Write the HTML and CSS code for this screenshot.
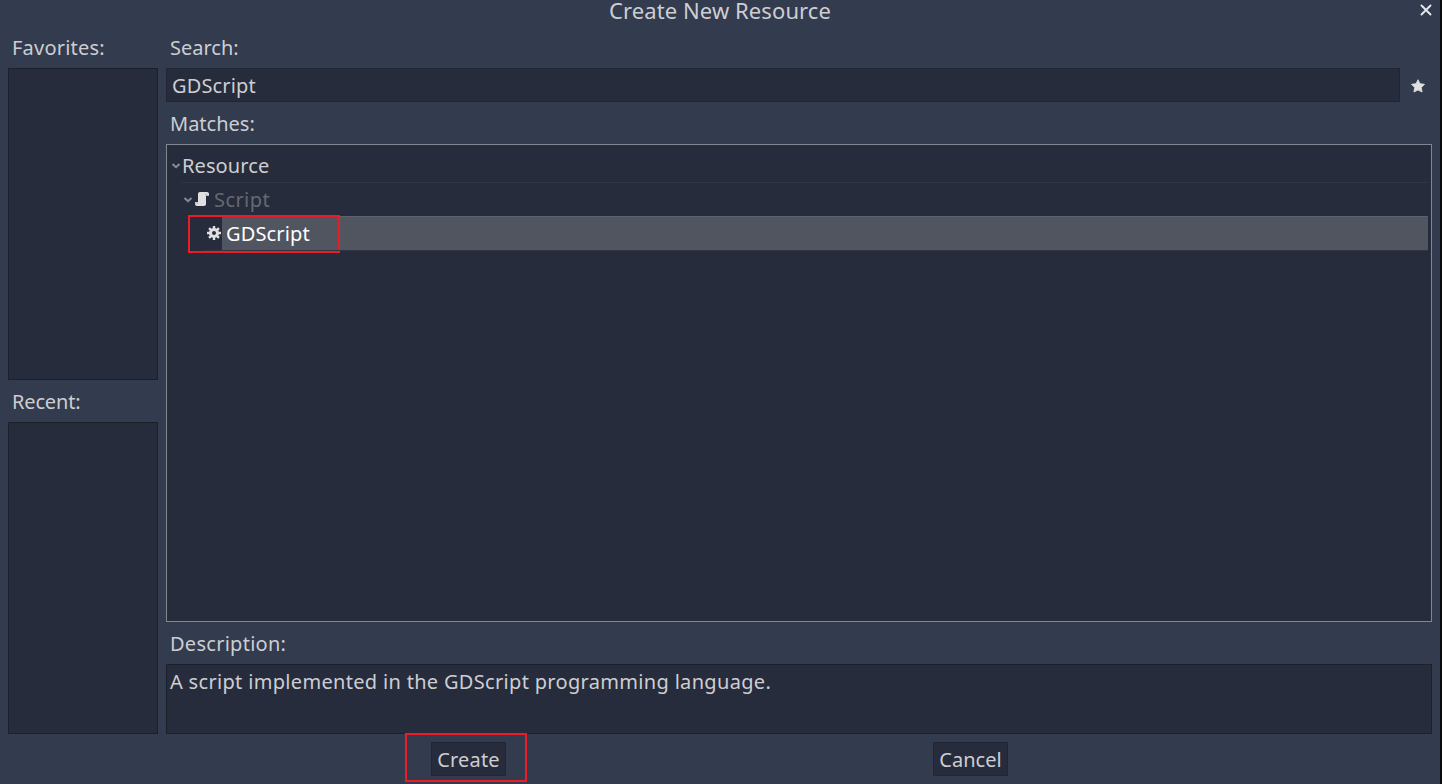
FILE: index.html
```html
<!DOCTYPE html>
<html lang="en">
<head>
<meta charset="utf-8">
<title>Create New Resource</title>
<link rel="stylesheet" href="styles.css">
</head>
<body>
<div class="dialog">
  <header class="titlebar">
    <h1 class="title">Create New Resource</h1>
    <svg class="close" viewBox="0 0 16 16"><path d="M3.500 3.500l9 9M12.500 3.500l-9 9" fill="none" stroke="#e8e9ec" stroke-width="1.900" stroke-linecap="round"/></svg>
  </header>
  <main class="columns">
    <aside class="side">
      <div class="label favorites">Favorites:</div>
      <div class="panel grow"></div>
      <div class="label recent">Recent:</div>
      <div class="panel grow"></div>
    </aside>
    <section class="content">
      <div class="label">Search:</div>
      <div class="search">
        <div class="input">GDScript</div>
        <svg class="star" viewBox="0 0 16 16"><path d="M8 1.700L10 5.700L14.500 6.300L11.300 9.500L12.100 14L8 12L3.900 14L4.700 9.500L1.500 6.300L6 5.700Z" fill="#e0e0e0" stroke="#e0e0e0" stroke-width=".8" stroke-linejoin="round"/></svg>
      </div>
      <div class="label">Matches:</div>
      <div class="tree">
        <div class="row root">
          <svg class="arrow" viewBox="0 0 12 12"><path d="M2.500 4L6 7.200L9.500 4" fill="none" stroke="#868b95" stroke-width="2"/></svg>
          <span class="name">Resource</span>
        </div>
        <div class="row child">
          <svg class="arrow" viewBox="0 0 12 12"><path d="M2.500 4L6 7.200L9.500 4" fill="none" stroke="#868b95" stroke-width="2"/></svg>
          <svg class="icon script-icon" viewBox="0 0 16 16"><path d="M6 1C4.900 1 4 1.900 4 3V11H1V13C1 14.100 1.900 15 3 15H10C11.100 15 12 14.100 12 13V5H15V3C15 1.900 14.100 1 13 1Z" fill="#e0e0e0"/><path d="M11.500 2.500V5H15V4H12.500V2.500ZM1 11.500H4V13H3V12.500H1Z" fill="#b4b6ba"/></svg>
          <span class="muted">Script</span>
        </div>
        <div class="row leaf">
          <svg class="icon" viewBox="0 0 16 16"><g fill="#e0e0e0"><path fill-rule="evenodd" d="M8 3a5 5 0 1 0 0 10a5 5 0 0 0 0-10ZM8 6a2 2 0 1 1 0 4a2 2 0 0 1 0-4Z"/><path id="teeth" d="M6.800 1H9.200V4H6.800ZM6.800 12H9.200V15H6.800Z"/><use href="#teeth" transform="rotate(45 8 8)"/><use href="#teeth" transform="rotate(90 8 8)"/><use href="#teeth" transform="rotate(135 8 8)"/></g></svg>
          <div class="selected">GDScript</div>
          <div class="mark mark-row"></div>
        </div>
      </div>
      <div class="label wide">Description:</div>
      <div class="panel description">A script implemented in the GDScript programming language.</div>
    </section>
  </main>
  <footer class="actions">
    <div class="slot"><button class="button create">Create</button><div class="mark mark-button"></div></div>
    <div class="slot"><button class="button">Cancel</button></div>
  </footer>
</div>
</body>
</html>
```
FILE: styles.css
```css
* { box-sizing: border-box; }
body {
  margin: 0;
  height: 784px;
  overflow: hidden;
  background: #080a0c;
  font: 20px/28px "Noto Sans", sans-serif;
  color: #cdced2;
}
.dialog {
  width: 1440px;
  height: 784px;
  display: flex;
  flex-direction: column;
  background: #333b4f;
}
.titlebar {
  position: relative;
  height: 26px;
  display: flex;
  justify-content: center;
}
.title {
  margin: 0;
  height: 20px;
  font-size: 22px;
  line-height: 20px;
  font-weight: 400;
  letter-spacing: .09px;
}
.close { position: absolute; right: 6px; top: 2px; width: 16px; height: 16px; }
.columns { height: 708px; display: flex; gap: 8px; padding: 0 8px; }
.side { width: 150px; display: flex; flex-direction: column; }
.content { flex: 1; display: flex; flex-direction: column; }
.label { height: 42px; flex: none; padding: 8px 4px 0; }
.favorites { letter-spacing: .22px; }
.recent { letter-spacing: -.15px; }
.wide { letter-spacing: .27px; }
.panel { background: #262c3b; border: 1px solid #1b202b; }
.grow { flex: 1; }
.search { display: flex; align-items: center; height: 34px; gap: 10px; }
.input {
  width: 1234px;
  height: 34px;
  padding: 3px 5px;
  background: #262c3b;
  border: 1px solid #202633;
  letter-spacing: .14px;
}
.star { width: 16px; height: 16px; margin-top: 1px; }
.tree { height: 478px; background: #262c3b; border: 1px solid #82868f; padding: 4px 3px; }
.row { position: relative; display: flex; align-items: center; height: 34px; }
.root::after, .child::after, .leaf::after {
  content: "";
  position: absolute;
  right: 0;
  bottom: 0;
  left: 12px;
  height: 1px;
  background: #303644;
}
.child::after { left: 24px; }
.leaf::after { left: 36px; bottom: -1px; }
.arrow { width: 12px; height: 12px; }
.icon { width: 16px; height: 16px; }
.script-icon { margin-top: -2px; }
.child { padding-left: 12px; }
.name { letter-spacing: .1px; }
.muted { margin-left: 4px; color: #646973; letter-spacing: .42px; }
.leaf { padding-left: 36px; margin-top: -1px; }
.selected {
  flex: 1;
  height: 34px;
  padding: 3px 4px;
  background: #515560;
  border-top: 1px solid #5d616b;
  color: #fff;
  letter-spacing: .14px;
}
.description { height: 70px; padding: 3px; letter-spacing: .32px; }
.actions { display: flex; gap: 7px; padding: 8px 0 0 221px; }
.slot { position: relative; width: 495px; display: flex; justify-content: center; }
.button {
  width: 75px;
  height: 34px;
  padding: 2px 0 0;
  font: inherit;
  color: inherit;
  background: #262c3b;
  border: 1px solid #202633;
}
.create { letter-spacing: .2px; }
.mark { position: absolute; border: 2px solid #ed1c24; }
.mark-row { left: 18px; top: -1px; width: 152px; height: 38px; }
.mark-button { left: 184px; top: -9px; width: 122px; height: 49px; }
```
